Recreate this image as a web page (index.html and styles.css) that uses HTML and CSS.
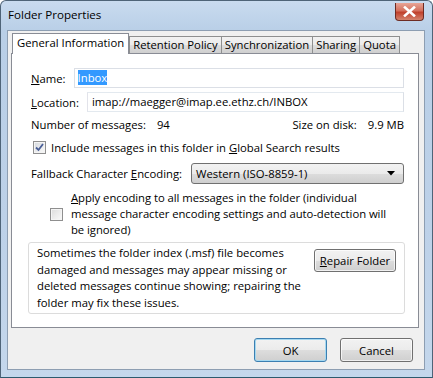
FILE: index.html
```html
<!doctype html>
<html lang="en">
<head>
  <meta charset="UTF-8">
  <title>Folder Properties</title>
  <link rel="stylesheet" href="styles.css">
</head>
<body>
  <div class="window">
    <div class="titlebar">
      <span class="title">Folder Properties</span>
      <a href="javascript:void(0);" class="close">
        <svg width="13" height="11" viewBox="0 0 13 11"><path d="M2 1.5 L11 9.5 M11 1.5 L2 9.5" stroke="#fff" stroke-width="2.6" stroke-linecap="square" fill="none"/></svg>
      </a>
    </div>
    <div class="client">
      <ul class="tabs">
        <li class="active">General Information</li>
        <li>Retention Policy</li>
        <li>Synchronization</li>
        <li>Sharing</li>
        <li>Quota</li>
      </ul>
      <div class="panel">
        <div class="row">
          <label class="lbl"><u>N</u>ame:</label>
          <div class="input name"><span class="sel">Inbox</span></div>
        </div>
        <div class="row row-loc">
          <label class="lbl"><u>L</u>ocation:</label>
          <div class="input loc">imap://maegger@imap.ee.ethz.ch/INBOX</div>
        </div>
        <div class="row row-info">
          <span>Number of messages:</span><span class="val">94</span>
          <span class="spacer"></span>
          <span>Size on disk:</span><span class="val">9.9 MB</span>
        </div>
        <div class="row row-check">
          <span class="check checked">
            <svg width="9" height="9" viewBox="0 0 9 9"><path d="M1 4.5 L3.5 7 L8 1" stroke="#4a5f97" stroke-width="1.8" fill="none"/></svg>
          </span>
          <span>Include messages in this folder in <u>G</u>lobal Search results</span>
        </div>
        <div class="row row-enc">
          <label class="lbl">Fallback Character <u>E</u>ncoding:</label>
          <div class="select">
            <span>Western (ISO-8859-1)</span>
            <svg width="8" height="5" viewBox="0 0 8 5"><path d="M0 0 H8 L4 4.5 Z" fill="#000"/></svg>
          </div>
        </div>
        <div class="row row-apply">
          <span class="check"></span>
          <span class="apply-text"><u>A</u>pply encoding to all messages in the folder (individual<br>message character encoding settings and auto-detection will<br>be ignored)</span>
        </div>
        <div class="repair">
          <p>Sometimes the folder index (.msf) file becomes damaged and messages may appear missing or deleted messages continue showing; repairing the folder may fix these issues.</p>
          <a href="javascript:void(0);" class="btn repair-btn"><u>R</u>epair Folder</a>
        </div>
      </div>
      <div class="buttons">
        <a href="javascript:void(0);" class="btn default">OK</a>
        <a href="javascript:void(0);" class="btn">Cancel</a>
      </div>
    </div>
  </div>
</body>
</html>
```

FILE: styles.css
```css
* {
  margin: 0;
  padding: 0;
  box-sizing: border-box;
}
body {
  width: 433px;
  height: 378px;
  overflow: hidden;
  font-family: "Open Sans", "Liberation Sans", sans-serif;
  font-size: 11.3px;
  color: #000;
}
u {
  text-decoration: underline;
  text-underline-offset: 1px;
}
.window {
  width: 433px;
  height: 378px;
  display: flex;
  flex-direction: column;
  background: linear-gradient(#c9dbef, #b9cfe7 30px, #bdd1e8 60%, #c4d7ec);
  border: 1px solid #4f6478;
  border-bottom-color: #2d5a6e;
  border-radius: 6px 6px 0 0;
}
.titlebar {
  height: 29px;
  display: flex;
  align-items: center;
  padding: 0 7px 2px 7px;
}
.title {
  flex: 1;
  color: #000;
  font-size: 11.6px;
}
.close {
  width: 29px;
  height: 18px;
  margin-top: -6px;
  margin-right: 1px;
  display: flex;
  align-items: center;
  justify-content: center;
  border: 1px solid #6d2b23;
  border-top: 0;
  border-radius: 0 0 4px 4px;
  background: linear-gradient(#e8a597, #d4705d 45%, #c0412c 55%, #d3836d);
}
.client {
  flex: 1;
  margin: 0 7px 7px 6px;
  background-color: #f0f0f0;
  border: 1px solid #8d9eb2;
  padding: 2px 0 0 3px;
  display: flex;
  flex-direction: column;
}
.tabs {
  list-style: none;
  display: flex;
  align-items: flex-end;
  height: 20px;
  margin-left: 1px;
  position: relative;
  z-index: 1;
}
.tabs li {
  flex: none;
  white-space: nowrap;
  height: 17px;
  line-height: 15px;
  padding: 0 3px;
  border: 1px solid #8e8f8f;
  border-bottom: 0;
  margin-left: -1px;
  background: linear-gradient(#f2f2f2, #ebebeb 50%, #dddddd 51%, #cfcfcf);
}
.tabs li.active {
  height: 21px;
  margin-bottom: -1px;
  padding: 0 4px;
  line-height: 18px;
  background: #fff;
  border-color: #898c95;
  margin-left: 0;
  margin-right: 1px;
}
.panel {
  width: 408px;
  height: 275px;
  background-color: #fff;
  border: 1px solid #898c95;
  padding: 14px 14px 0 19px;
  display: flex;
  flex-direction: column;
}
.row {
  display: flex;
  align-items: center;
}
.lbl {
  margin-right: 8px;
}
.input {
  flex: 1;
  height: 20px;
  line-height: 17px;
  border: 1px solid #abadb3;
  border-top-color: #e3e9ef;
  border-left-color: #e2e3ea;
  border-right-color: #dbdfe6;
  border-bottom-color: #e3e9ef;
  padding: 0 3px;
}
.name {
  border-color: #dbdfe6;
}
.sel {
  background-color: #3399ff;
  color: #fff;
}
.row-loc {
  margin-top: 4px;
}
.loc {
  padding-left: 4px;
}
.row-info {
  margin-top: 4px;
  height: 16px;
}
.val {
  margin-left: 11px;
}
.spacer {
  flex: 1;
}
.row-check {
  margin-top: 7px;
  height: 16px;
  padding-left: 2px;
}
.check {
  width: 13px;
  height: 13px;
  flex: none;
  border: 1px solid #8f8f8f;
  background: linear-gradient(135deg, #dcdcdc, #f4f4f4 80%);
  box-shadow: inset 0 0 0 1px #f4f4f4;
  margin-right: 5px;
  display: flex;
  align-items: center;
  justify-content: center;
}
.checked {
  background: linear-gradient(135deg, #d4d8de, #f4f4f4 80%);
}
.row-enc {
  margin-top: 8px;
  height: 21px;
}
.row-enc .lbl {
  margin-right: 9px;
}
.select {
  flex: 1;
  height: 21px;
  border: 1px solid #707070;
  border-radius: 3px;
  background: linear-gradient(#f2f2f2, #ebebeb 50%, #dddddd 51%, #cfcfcf);
  display: flex;
  align-items: center;
  justify-content: space-between;
  padding: 0 8px 0 4px;
}
.row-apply {
  margin-top: 6px;
  align-items: center;
  padding-left: 19px;
}
.row-apply .check {
  margin-right: 8px;
}
.apply-text {
  line-height: 16px;
  white-space: nowrap;
  letter-spacing: -0.05px;
}
.repair {
  margin: 4px -1px 0 -3px;
  height: 72px;
  border: 1px solid #dcdcdc;
  border-radius: 3px;
  display: flex;
  justify-content: space-between;
  align-items: flex-start;
  padding: 2px 8px 0 8px;
}
.repair p {
  width: 266px;
  line-height: 16.7px;
}
.btn {
  display: flex;
  align-items: center;
  justify-content: center;
  height: 24px;
  border: 1px solid #707070;
  border-radius: 3px;
  background: linear-gradient(#f2f2f2, #ebebeb 50%, #dddddd 51%, #cfcfcf);
  box-shadow: inset 0 0 0 1px rgba(255, 255, 255, .7);
  color: #000;
  text-decoration: none;
}
.repair-btn {
  width: 82px;
  height: 23px;
  margin-top: 4px;
}
.buttons {
  display: flex;
  justify-content: flex-end;
  gap: 13px;
  padding: 10px 11px 0 0;
}
.buttons .btn {
  width: 73px;
}
.btn.default {
  border-color: #3c7fb1;
  box-shadow: inset 0 0 0 1px #a5d8f0;
}
```
